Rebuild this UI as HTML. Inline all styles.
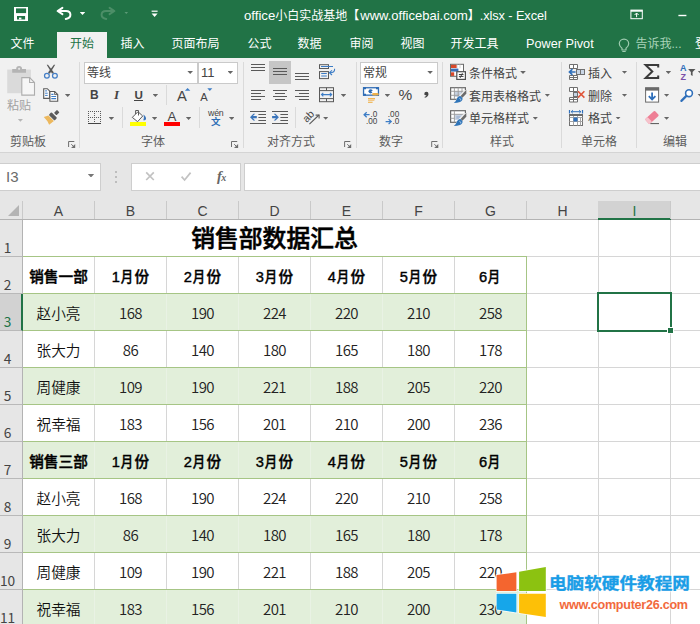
<!DOCTYPE html>
<html lang="zh-CN">
<head>
<meta charset="utf-8">
<title>office小白实战基地【www.officebai.com】.xlsx - Excel</title>
<style>
html,body{margin:0;padding:0;background:#fff}
#app{position:relative;width:700px;height:624px;overflow:hidden;background:#e6e6e6;
 font-family:"Liberation Sans","Noto Sans CJK SC",sans-serif;font-size:12px;color:#444;line-height:1}
.a,#app svg{position:absolute}
#app svg{overflow:visible}
/* title bar + tabs */
.tbar{position:absolute;left:0;top:0;width:700px;height:58px;background:#217346}
.ttl{position:absolute;left:244px;top:7px;height:18px;line-height:18px;color:#fff;font-size:13.2px;white-space:nowrap}
.ttl .t2{font-size:13px;margin-left:1px}
.ttl .t3{font-size:12.8px;letter-spacing:-.1px}
.ttl b{font-weight:400;font-size:12px}
.tab{position:absolute;top:32px;height:26px;line-height:24px;color:#fff;font-size:12px;white-space:nowrap}
.tab.on{background:#f1f1f1;color:#217346;text-align:center}
/* ribbon */
.rib{position:absolute;left:0;top:58px;width:700px;height:94px;background:#f1f1f1}
.ribline{position:absolute;left:0;top:152px;width:700px;height:1px;background:#d4d4d4}
.gsep{position:absolute;top:62px;width:1px;height:86px;background:#dadada}
.ssep{position:absolute;width:1px;background:#dadada}
.glab{position:absolute;top:135px;height:14px;line-height:14px;font-size:12px;color:#5c5c5c;white-space:nowrap;text-align:center}
.lbl{position:absolute;height:14px;line-height:14px;font-size:12px;color:#444;white-space:nowrap}
.combo{position:absolute;background:#fff;border:1px solid #cacaca;box-sizing:border-box}
.dd{position:absolute;width:5.6px;height:2.9px;background:#666;clip-path:polygon(0 0,100% 0,50% 100%)}
.dd.w{background:#fff}
.dd.dim{background:#5b9a76;width:4.4px;height:2.4px}
.dd.lt{background:#b5b5b5}
.dd.nb{background:#777;width:6.4px;height:3.4px}
/* formula bar */
.fbox{position:absolute;top:163px;height:28px;background:#fff;border:1px solid #cecece;box-sizing:border-box}
.nbtxt{position:absolute;left:6px;top:168px;height:18px;line-height:18px;font-size:15px;color:#6a6a6a}
/* grid */
.corner{position:absolute;left:8px;top:205px;width:0;height:0;border-left:11px solid transparent;border-bottom:11px solid #b4b4b4}
.ch{position:absolute;top:200px;height:19px;line-height:22px;text-align:center;font-size:14px;color:#444}
.ch.sel{background:#d2d2d2;color:#217346;height:17px;border-bottom:2px solid #217346;top:201px;margin-left:-1px;padding:0 1px;line-height:20px}
.chsep{position:absolute;top:201px;width:1px;height:18px;background:#c9c9c9}
.hdrline{position:absolute;left:0;top:219px;width:700px;height:1px;background:#b3b3b3}
.sheetbg{position:absolute;left:23px;top:220px;width:677px;height:404px;background:#fff}
.vl{position:absolute;top:220px;width:1px;height:404px;background:#d6d6d6}
.hl{position:absolute;left:23px;width:677px;height:1px;background:#d6d6d6}
.fill{position:absolute}
.ghl{position:absolute;height:1px;background:#a6c585}
.gvl{position:absolute;width:1px;background:#a6c585}
.fvl{position:absolute;width:1px;background:#e9f2e4}
.c{position:absolute;width:71px;height:36px;line-height:40px;text-align:center;color:#000;white-space:nowrap}
.c.hb{font-weight:500;font-size:14.67px;line-height:41px;-webkit-text-stroke:.4px #000}
.c.hb i{font-style:normal;display:inline-block;transform:scaleX(.84);transform-origin:35% 50%}
.c.nm{font-weight:350;font-size:14.67px;color:#111}
.c.nu{font-family:'Noto Sans CJK SC',sans-serif;font-weight:350;font-size:15px;color:#222;letter-spacing:-.5px;line-height:37px}
.title{position:absolute;text-align:center;font-weight:500;-webkit-text-stroke:.55px #000;font-size:23.8px;padding-top:1px;color:#000;white-space:nowrap}
.selbox{position:absolute;border:2px solid #217346}
.handle{position:absolute;width:5px;height:5px;background:#217346;border:1px solid #fff}
.rowhdrbg{position:absolute;left:0;top:220px;width:22px;height:404px;background:#e6e6e6}
.rowline{position:absolute;left:22px;top:220px;width:1px;height:404px;background:#b3b3b3}
.rh{position:absolute;left:0;width:22px;height:36px;border-bottom:1px solid #b9b9b9;font-size:13.7px;color:#444;font-family:'Noto Sans CJK SC',sans-serif}
.rh span{position:absolute;left:-7px;width:29px;bottom:2px;text-align:center;line-height:14px}
.rh.sel{background:#d2d2d2;color:#217346;width:21px;border-right:2px solid #217346}
/* watermark */
.wm1{position:absolute;left:549px;top:572px;font-size:15.8px;transform:scaleX(1.115);transform-origin:0 0;line-height:24px;font-weight:700;color:#1a9de6;-webkit-text-stroke:.35px #1a9de6;white-space:nowrap;text-shadow:0 0 2px #fff,0 0 2px #fff,0 0 3px #fff}
.wm2{position:absolute;left:559.4px;top:596px;font-size:12.6px;letter-spacing:-.27px;line-height:18px;font-weight:700;color:#f26a3d;white-space:nowrap;text-shadow:0 0 2px #fff,0 0 2px #fff,0 0 3px #fff}
</style>
</head>
<body>
<div id="app">
<!-- ===== title bar + tab strip ===== -->
<div class="tbar"></div>
<div class="ttl">office<b>小白实战基地【</b><span class="t2">www.officebai.com</span><b>】</b><span class="t3">.xlsx - Excel</span></div>
<div class="tab" style="left:10.5px">文件</div>
<div class="tab on" style="left:57px;width:50px">开始</div>
<div class="tab" style="left:120.5px">插入</div>
<div class="tab" style="left:171.5px">页面布局</div>
<div class="tab" style="left:247.5px">公式</div>
<div class="tab" style="left:297.5px">数据</div>
<div class="tab" style="left:349.5px">审阅</div>
<div class="tab" style="left:400.5px">视图</div>
<div class="tab" style="left:450.5px">开发工具</div>
<div class="tab" style="left:526px;font-size:12.7px">Power Pivot</div>
<div class="tab" style="left:635.5px;color:#a9d3b9">告诉我...</div>
<div class="tab" style="left:694.9px">登录</div>

<!-- ===== ribbon ===== -->
<div class="rib"></div>
<div class="ribline"></div>
<div class="gsep" style="left:79px"></div>
<div class="gsep" style="left:243px"></div>
<div class="gsep" style="left:356px"></div>
<div class="gsep" style="left:442px"></div>
<div class="gsep" style="left:561px"></div>
<div class="gsep" style="left:636px"></div>

<!-- clipboard group -->
<div class="lbl" style="left:7px;top:99px;color:#a2a2a2">粘贴</div>
<div class="glab" style="left:10px;width:36px">剪贴板</div>

<!-- font group -->
<div class="combo" style="left:84px;top:62px;width:114px;height:22px"></div>
<div class="combo" style="left:198px;top:62px;width:40px;height:22px"></div>
<div class="lbl" style="left:87px;top:66px">等线</div>
<div class="lbl" style="left:201px;top:66px;font-size:13px">11</div>
<div class="lbl" style="left:90px;top:87px;font-size:12px;font-weight:700;line-height:16px;height:16px;color:#444">B</div>
<div class="lbl" style="left:114px;top:87px;font-size:13px;font-style:italic;font-weight:700;font-family:'Liberation Serif',serif;line-height:16px;height:16px;color:#444">I</div>
<div class="lbl" style="left:134.6px;top:87px;font-size:11.6px;line-height:16px;height:16px;color:#444;font-weight:700">U</div>
<div class="a" style="left:134px;top:100px;width:9px;height:1px;background:#444"></div>
<div class="ssep" style="left:166px;top:85px;height:20px"></div>
<div class="lbl" style="left:177px;top:87.6px;font-size:14.8px;line-height:17px;height:17px;color:#444">A</div>
<div class="lbl" style="left:200.2px;top:90px;font-size:11.2px;line-height:15px;height:15px;color:#444">A</div>
<div class="ssep" style="left:122px;top:107px;height:21px"></div>
<div class="a" style="left:130px;top:122px;width:16px;height:4px;background:#ffff00"></div>
<div class="lbl" style="left:167.6px;top:109.4px;font-size:13.3px;line-height:15px;height:15px;color:#444">A</div>
<div class="a" style="left:164px;top:122px;width:16px;height:4px;background:#ff0000"></div>
<div class="ssep" style="left:199px;top:107px;height:21px"></div>
<div class="lbl" style="left:208px;top:107.6px;font-size:8.8px;line-height:10px;height:10px;color:#444;letter-spacing:-.2px">wén</div>
<div class="lbl" style="left:211px;top:117px;font-size:9.5px;line-height:10px;height:10px;color:#2b6cb5;font-weight:700">文</div>
<div class="glab" style="left:141px;width:24px">字体</div>

<!-- alignment group -->
<div class="a" style="left:269px;top:61px;width:22px;height:23px;background:#c6c6c6"></div>
<div class="ssep" style="left:295px;top:107px;height:21px"></div>
<div class="glab" style="left:267px;width:48px">对齐方式</div>

<!-- number group -->
<div class="combo" style="left:360px;top:62px;width:78px;height:22px"></div>
<div class="lbl" style="left:363px;top:66px">常规</div>
<div class="lbl" style="left:398.6px;top:86.3px;font-size:15.4px;line-height:17px;height:17px;color:#444">%</div>
<div class="glab" style="left:379px;width:24px">数字</div>

<!-- styles group -->
<div class="lbl" style="left:469px;top:67px">条件格式</div>
<div class="lbl" style="left:469px;top:90px">套用表格格式</div>
<div class="lbl" style="left:469px;top:112px">单元格样式</div>
<div class="glab" style="left:490px;width:24px">样式</div>

<!-- cells group -->
<div class="lbl" style="left:588px;top:67px">插入</div>
<div class="lbl" style="left:588px;top:90px">删除</div>
<div class="lbl" style="left:588px;top:112px">格式</div>
<div class="glab" style="left:581px;width:36px">单元格</div>

<!-- editing group -->
<div class="glab" style="left:663px;width:24px">编辑</div>

<!-- dropdown arrows -->
<div class="dd w" style="left:79.7px;top:12.1px"></div>
<div class="dd dim" style="left:124.1px;top:11.5px"></div>
<div class="dd lt" style="left:17.6px;top:118.8px"></div>
<div class="dd" style="left:64.9px;top:94.0px"></div>
<div class="dd" style="left:187.4px;top:71.0px"></div>
<div class="dd" style="left:227.5px;top:71.0px"></div>
<div class="dd" style="left:152.6px;top:94.0px"></div>
<div class="dd" style="left:108.6px;top:117.0px"></div>
<div class="dd" style="left:151.8px;top:117.0px"></div>
<div class="dd" style="left:185.8px;top:117.0px"></div>
<div class="dd" style="left:228.9px;top:117.0px"></div>
<div class="dd" style="left:340.7px;top:94.0px"></div>
<div class="dd" style="left:322.9px;top:116.8px"></div>
<div class="dd" style="left:427.3px;top:71.0px"></div>
<div class="dd" style="left:384.6px;top:94.0px"></div>
<div class="dd" style="left:520.2px;top:71.0px"></div>
<div class="dd" style="left:544.6px;top:93.8px"></div>
<div class="dd" style="left:532.5px;top:116.8px"></div>
<div class="dd" style="left:621.7px;top:70.8px"></div>
<div class="dd" style="left:621.7px;top:93.8px"></div>
<div class="dd" style="left:615.3px;top:116.5px"></div>
<div class="dd" style="left:665.6px;top:71.0px"></div>
<div class="dd" style="left:663.8px;top:93.8px"></div>
<div class="dd" style="left:663.8px;top:116.8px"></div>
<div class="dd" style="left:697.8px;top:71.0px"></div>
<div class="dd" style="left:697.4px;top:93.8px"></div>
<!-- small icon texts -->
<div class="lbl" style="left:301px;top:109.6px;width:14px;font-size:10.5px;line-height:12px;height:12px;color:#444;transform:rotate(-45deg);transform-origin:50% 50%;text-align:center">ab</div>
<div class="lbl" style="left:370.4px;top:110px;font-size:8.2px;line-height:9px;height:9px;color:#444">.0</div>
<div class="lbl" style="left:366px;top:117px;font-size:8.2px;line-height:9px;height:9px;color:#444">.00</div>
<div class="lbl" style="left:387.8px;top:110px;font-size:8.2px;line-height:9px;height:9px;color:#444">.00</div>
<div class="lbl" style="left:392.6px;top:117px;font-size:8.2px;line-height:9px;height:9px;color:#444">.0</div>
<div class="lbl" style="left:680px;top:63px;font-size:9px;line-height:10px;height:10px;color:#2f6fba;font-weight:700">A</div>
<div class="lbl" style="left:680.4px;top:71.6px;font-size:9px;line-height:10px;height:10px;color:#7b4fa8;font-weight:700">Z</div>
<!-- ===== formula bar ===== -->
<div class="fbox" style="left:-1px;width:102px"></div>
<div class="fbox" style="left:131px;width:110px"></div>
<div class="fbox" style="left:244px;width:460px"></div>
<div class="nbtxt">I3</div>
<div class="dd nb" style="left:87.8px;top:174.1px"></div>
<div class="a" style="left:115px;top:171px;width:2px;height:2px;background:#bdbdbd;box-shadow:0 5px 0 #bdbdbd,0 10px 0 #bdbdbd"></div>
<div class="lbl" style="left:217px;top:168px;font-size:14.5px;line-height:16px;height:16px;font-style:italic;font-weight:700;font-family:'Liberation Serif',serif;color:#666">f<span style="font-size:10px;margin-left:-.5px">x</span></div>

<!-- ===== icons (single overlay, page pixel coordinates) ===== -->
<svg id="ico" width="700" height="200" viewBox="0 0 700 200" style="left:0;top:0">
<!-- title-bar icons -->
<g id="qat">
<rect x="14" y="7" width="14" height="14" fill="#fff"/>
<rect x="16" y="8.4" width="10.1" height="4.7" fill="#217346"/>
<rect x="17" y="16" width="8.1" height="3.5" fill="#217346"/>
<rect x="19" y="17.6" width="2.4" height="1.9" fill="#fff"/>
<path d="M62.4 7.8 L57.6 11 L62.4 14.1 M58 11 H66 C69 11 70.4 12.8 70.4 14.8 C70.4 17 68.4 18.5 65.8 18.9" fill="none" stroke="#fff" stroke-width="2" stroke-linecap="round" stroke-linejoin="round"/>
<path d="M109.6 7.8 L114.4 11 L109.6 14.1 M114 11 H106 C103 11 101.6 12.8 101.6 14.8 C101.6 17 103.6 18.5 106.2 18.9" fill="none" stroke="#4c8e67" stroke-width="2" stroke-linecap="round" stroke-linejoin="round"/>
<rect x="151.6" y="10.6" width="6" height="1.2" fill="#fff"/>
<path d="M151.6 13.6 h6 l-3 3.4 z" fill="#fff"/>
<!-- ribbon display options -->
<rect x="630.9" y="10.1" width="11.4" height="8.6" fill="none" stroke="#fff" stroke-width="1"/>
<rect x="630.9" y="10.1" width="11.4" height="1.6" fill="#fff"/>
<path d="M636.6 17.2 V13.2 M634.6 15 L636.6 13 L638.6 15" fill="none" stroke="#fff" stroke-width="1"/>
<rect x="678.4" y="14.8" width="8" height="1.4" fill="#fff"/>
<!-- tell-me bulb -->
<path d="M622 50 v-1.8 c-1.8 -1.2 -2.7 -2.6 -2.7 -4.4 a4.7 4.7 0 0 1 9.4 0 c0 1.8 -0.9 3.2 -2.7 4.4 v1.8 z M622.3 51.5 h3.4" fill="none" stroke="#9fccb0" stroke-width="1.2" stroke-linejoin="round"/>
</g>

<!-- clipboard group -->
<g id="clip">
<rect x="7.2" y="69.6" width="23.7" height="23.6" fill="#dadada"/>
<path d="M12.2 72.7 V68.9 h4 v-.4 a2.9 2.6 0 0 1 5.8 0 v.4 h4 v3.8 z" fill="#b4b4b4"/>
<circle cx="19.1" cy="68.8" r="1.1" fill="#e4e4e4"/>
<path d="M21.8 77.6 h7.8 l4.9 4.9 v12.6 h-12.7 z" fill="#f6f6f6" stroke="#adadad" stroke-width="1.1"/>
<path d="M29.6 77.6 v4.9 h4.9" fill="none" stroke="#adadad" stroke-width="1.1"/>
<!-- scissors -->
<path d="M46.7 64.7 L48 64.7 L53.9 72.5 L52.1 73.8 z" fill="#585858"/><path d="M55.2 64.7 L53.9 64.7 L48 72.5 L49.8 73.8 z" fill="#585858"/>
<circle cx="46.9" cy="75.7" r="2.4" fill="none" stroke="#457fc6" stroke-width="1.25"/>
<circle cx="54.9" cy="75.7" r="2.4" fill="none" stroke="#457fc6" stroke-width="1.25"/>
<!-- copy -->
<path d="M43.7 88.7 h3.6 l2.2 2.2 v7.5 h-5.8 z" fill="#fff" stroke="#5a5a5a" stroke-width="1.1"/>
<path d="M45.1 90.9 h2 M45.1 93.2 h2.6 M45.1 95.4 h2.6" stroke="#3d7dc6" stroke-width="1"/>
<path d="M49.9 91.5 h4.8 l3 3 v6.8 h-7.8 z" fill="#fff" stroke="#5a5a5a" stroke-width="1.1"/>
<path d="M54.6 91.7 v2.9 h2.9" fill="none" stroke="#5a5a5a" stroke-width=".9"/>
<path d="M51.3 94.4 h2.2 M51.3 96.5 h4.8 M51.3 98.6 h4.8" stroke="#3d7dc6" stroke-width="1.1"/>
<!-- format painter -->
<g transform="translate(52.9 116.4) rotate(45)">
<rect x="-1.7" y="-7.5" width="3.4" height="4.2" rx=".5" fill="#5b5b5b"/>
<rect x="-4.1" y="-1.9" width="8.2" height="3.7" rx=".9" fill="#5b5b5b"/>
<path d="M-3.9 2.5 h7.8 l-.7 6 l-3.6 -1.2 l-5.6 -.4 z" fill="#ecb85e"/>
</g>
<!-- dialog launchers -->
<path d="M68.6 147 v-5.5 h5.7 M71.3 144.2 l2.4 2.4" fill="none" stroke="#6e6e6e" stroke-width="1"/>
<path d="M71.1 148 h4.1 v-4.1 z" fill="#6e6e6e"/>
<path d="M231.5 147 v-5.5 h5.7 M234.2 144.2 l2.4 2.4" fill="none" stroke="#6e6e6e" stroke-width="1"/>
<path d="M234.0 148 h4.1 v-4.1 z" fill="#6e6e6e"/>
<path d="M344.6 147 v-5.5 h5.7 M347.3 144.2 l2.4 2.4" fill="none" stroke="#6e6e6e" stroke-width="1"/>
<path d="M347.1 148 h4.1 v-4.1 z" fill="#6e6e6e"/>
<path d="M431.7 147 v-5.5 h5.7 M434.4 144.2 l2.4 2.4" fill="none" stroke="#6e6e6e" stroke-width="1"/>
<path d="M434.2 148 h4.1 v-4.1 z" fill="#6e6e6e"/>

</g>

<!-- font group icons -->
<g id="font">
<!-- borders icon -->
<path d="M88 111.5 h13 M88 117.5 h13 M88.5 111 v12 M94.5 111 v12 M100.5 111 v12" stroke="#5a5a5a" stroke-width="1" stroke-dasharray="1 1" fill="none" shape-rendering="crispEdges"/>
<path d="M88 123.5 h13" stroke="#444" stroke-width="1" shape-rendering="crispEdges"/>
<!-- fill bucket -->
<path d="M132.3 117.4 L138 111.7 L142.7 116 L137.6 121.7 z" fill="#fff" stroke="#5a5a5a" stroke-width="1" stroke-linejoin="round"/>
<path d="M135.6 114 v-3.5 h2.9 v5" fill="none" stroke="#5a5a5a" stroke-width="1"/>
<path d="M143.2 114.4 c2.2 1.2 3.2 3 2.8 4.6 c-.3 1.1 -1.300 1.600 -2.800 1.200 c.9 -1.600 1 -3.600 0 -5.800 z" fill="#3a74ba"/>
<!-- grow / shrink triangles -->
<path d="M184.9 90.7 h5.4 l-2.7 -2.6 z" fill="#3d7dc6"/>
<path d="M207.3 88.3 h5 l-2.5 2.7 z" fill="#3d7dc6"/>
</g>

<!-- alignment group icons -->
<g id="align" stroke="#595959" stroke-width="1" fill="none">
<path d="M251 64.5 h14 M251 67.5 h14 M251 70.5 h14"/>
<path d="M273 68.5 h14 M273 71.5 h14 M273 74.5 h14"/>
<path d="M295 73.5 h14 M295 76.5 h14 M295 79.5 h14"/>
<path d="M251 90.5 h14 M251 93.5 h10 M251 96.5 h14 M251 99.5 h10"/>
<path d="M273 90.5 h14 M275 93.5 h10 M273 96.5 h14 M275 99.5 h10"/>
<path d="M295 90.5 h14 M299 93.5 h10 M295 96.5 h14 M299 99.5 h10"/>
<!-- indent -->
<path d="M250 111.5 h16 M258.4 114.5 h7.6 M258.4 117.5 h7.6 M258.4 120.5 h7.6 M250 123.5 h16"/>
<path d="M272 111.5 h16 M280.4 114.5 h7.6 M280.4 117.5 h7.6 M280.4 120.5 h7.6 M272 123.5 h16"/>
<path d="M250 117.2 L253.4 113.8 L255.2 113.8 L252.9 116.1 H256.8 V118.3 H252.9 L255.2 120.6 L253.4 120.6 Z" fill="#3a74ba" stroke="none"/>
<path d="M278.9 117.2 L275.5 113.8 L273.7 113.8 L276 116.1 H272.1 V118.3 H276 L273.7 120.6 L275.5 120.6 Z" fill="#3a74ba" stroke="none"/>
<!-- wrap text -->
<rect x="319.5" y="64.7" width="9" height="3.8"/>
<rect x="319.5" y="71.6" width="9" height="7"/>
<path d="M321 66.5 h12" stroke="#3d7dc6"/>
<path d="M321.2 73.5 h5.6 M321.2 76 h5.6" stroke="#3d7dc6" stroke-width="1.1"/>
<path d="M334.6 68.8 c.2 2.6 -1 3.9 -4.8 3.9 M332 70.4 l-2.6 2.3 l2.6 2.3" stroke="#3d7dc6" stroke-width="1.1"/>
<!-- merge & center -->
<rect x="319.5" y="87.7" width="14" height="14"/>
<path d="M319.5 90.6 h14 M319.5 98.6 h14 M326.5 87.7 v2.9 M326.5 98.6 v3.1"/>
<path d="M321.4 94.6 h10.4 M323.3 92.9 l-1.8 1.7 l1.8 1.7 M329.9 92.9 l1.8 1.7 l-1.8 1.7" stroke="#3d7dc6" stroke-width="1.1"/>
<!-- orientation -->
<path d="M309.4 124.2 L319 115" stroke-width="1.1"/>
<path d="M315.6 115.1 h3.5 v3.4" stroke-width="1.1"/>
</g>

<!-- number group icons -->
<g id="num">
<rect x="363.55" y="87.75" width="14.9" height="7.4" fill="#fff" stroke="#2f6cb5" stroke-width="1.3"/>
<path d="M363 87.2 h3 v2 h-3 z M376 87.2 h3 v2 h-3 z M363 93.7 h3 v2 h-3 z M376 93.7 h3 v2 h-3 z" fill="#2f6cb5"/>
<circle cx="370.6" cy="91.3" r="2.1" fill="#2f6cb5"/>
<path d="M371 91.3 l2.4 -.6 v2.4 z" fill="#fff"/>
<rect x="372.1" y="92.9" width="6.6" height="2.7" rx="1.3" fill="#eeb04a"/>
<rect x="368" y="98" width="7" height="1.4" fill="#efb555"/>
<rect x="368" y="99.8" width="6.4" height="1.1" fill="#f2c37a"/>
<rect x="368" y="101.7" width="4.6" height="1.2" fill="#efb555"/>
<!-- comma -->
<path d="M424.3 93.9 a2.1 2.1 0 1 1 4.2 0 c0 1.7 -1.3 3.1 -3.6 3.9 l-.4 -.8 c1.1 -.5 1.8 -1.1 1.9 -1.7 c-1.2 0 -2.1 -.4 -2.1 -1.4 z" fill="#444"/>
<!-- decimal arrows -->
<path d="M369.6 114.7 h-5.6 M366.7 112.2 l-2.6 2.5 l2.6 2.5" fill="none" stroke="#3d7dc6" stroke-width="1.3"/>
<path d="M385.6 121.6 h5.6 M388.6 119.1 l2.6 2.5 l-2.6 2.5" fill="none" stroke="#3d7dc6" stroke-width="1.3"/>
</g>
<!-- styles group icons -->
<g id="styles">
<!-- conditional formatting -->
<rect x="450.5" y="64.3" width="13" height="12" fill="#fff" stroke="#6a6a6a" stroke-width="1"/>
<path d="M457 64.3 v4 M460 64.3 v4" stroke="#c8c8c8" stroke-width=".8" fill="none"/>
<rect x="451" y="64.8" width="5.6" height="3.2" fill="#d8482a"/>
<rect x="451" y="68.6" width="7.4" height="3" fill="#3a6fb7"/>
<rect x="451" y="72.3" width="3.2" height="3.6" fill="#d8482a"/>
<rect x="456.8" y="71.7" width="8.6" height="7.7" fill="#fff" stroke="#4f4f4f" stroke-width="1.2"/>
<path d="M458.9 74.5 h4.6 M458.9 76.4 h4.6 M462.4 73.2 l-2.2 4.6" stroke="#3f3f3f" stroke-width="1" fill="none"/>
<!-- format as table -->
<rect x="450.6" y="87.7" width="14.8" height="11.6" fill="#fff" stroke="#6a6a6a" stroke-width="1.2"/>
<rect x="454.4" y="91.3" width="8" height="5.6" fill="#c7d2e2"/>
<path d="M450.6 91.3 h14.8 M450.6 95.3 h14.8 M454.4 87.7 v11.6 M458.2 87.7 v11.6 M462 87.7 v11.6" stroke="#9a9a9a" stroke-width=".9" fill="none"/>
<path d="M467.4 90.0 L467.4 101.5 L461.8 104.0 L452.6 104.0 L452.6 101.4 L456 100.0 L459.2 95.6 L464.6 90.0 z" fill="#f1f1f1"/>
<path d="M466.3 89.8 V93.8 L462.4 97.8 L460.6 96.0 z" fill="#6b6b6b"/>
<path d="M460.4 96.1 l2 2 c.6 1.6 -.5 3.1 -2.4 3.8 c-1.9 .7 -4 .9 -6.2 1 c1.6 -1 2.2 -2.2 2.8 -3.6 c.7 -1.8 2 -3 3.8 -3.2 z" fill="#2f74b8"/>
<path d="M459.6 98.4 c.9 .2 1.3 .9 1 1.9" stroke="#cfe0f2" stroke-width=".9" fill="none"/>
<!-- cell styles -->
<rect x="450.6" y="110.7" width="14.8" height="11.6" fill="#fff" stroke="#6a6a6a" stroke-width="1.2"/>
<rect x="454.4" y="114.3" width="8" height="5.6" fill="#c7d2e2"/>
<path d="M450.6 114.3 h14.8 M454.4 110.7 v11.6 M450.6 118.3 h3.8" stroke="#9a9a9a" stroke-width=".9" fill="none"/>
<rect x="456.4" y="115.9" width="4" height="3" fill="#a9bbd6"/>
<path d="M467.4 113.0 L467.4 124.5 L461.8 127.0 L452.6 127.0 L452.6 124.4 L456 123.0 L459.2 118.6 L464.6 113.0 z" fill="#f1f1f1"/>
<path d="M466.3 112.8 V116.8 L462.4 120.8 L460.6 119.0 z" fill="#6b6b6b"/>
<path d="M460.4 119.1 l2 2 c.6 1.6 -.5 3.1 -2.4 3.8 c-1.9 .7 -4 .9 -6.2 1 c1.6 -1 2.2 -2.2 2.8 -3.6 c.7 -1.8 2 -3 3.8 -3.2 z" fill="#2f74b8"/>
<path d="M459.6 121.4 c.9 .2 1.3 .9 1 1.9" stroke="#cfe0f2" stroke-width=".9" fill="none"/>
</g>

<!-- cells group icons -->
<g id="cells" fill="none" stroke="#707070" stroke-width="1">
<!-- insert -->
<path d="M569.5 64.5 h8 v4 h-8 z M573.5 64.5 v4" fill="#fff"/>
<path d="M569.5 75.5 h8 v4 h-8 z" fill="#fff"/><path d="M573.5 75.5 v4 M569.5 77.5 h8"/>
<rect x="576.5" y="69.5" width="8" height="5" fill="#c9d6e6"/>
<path d="M580.5 69.5 v5"/>
<path d="M575.6 72 h-6 M572.4 69.2 l-2.9 2.8 l2.9 2.8" stroke="#2f6fba" stroke-width="1.7"/>
<!-- delete -->
<path d="M569.5 87.5 h8 v4 h-8 z" fill="#fff"/><path d="M573.5 87.5 v4"/>
<rect x="573.5" y="92.5" width="4" height="4" fill="#c9d6e6"/>
<path d="M569.5 97.5 h8 v4.5 h-8 z" fill="#fff"/><path d="M573.5 97.5 v4.5 M569.5 99.5 h8"/>
<path d="M578 91.2 l6.4 6.4 M584.4 91.2 l-6.4 6.4" stroke="#e0563a" stroke-width="1.6"/>
<!-- format -->
<path d="M569.5 110 v3.4 M582.5 110 v3.4" stroke="#2f6fba" stroke-width="1.2"/>
<path d="M571 111.7 h10 M572.8 110.2 l-1.6 1.5 l1.6 1.5 M579.2 110.2 l1.6 1.5 l-1.6 1.5" stroke="#2f6fba" stroke-width="1"/>
<rect x="569.5" y="114.5" width="13" height="11" fill="#fff"/>
<path d="M569.5 117.5 h13 M569.5 121.5 h13 M573.5 114.5 v11 M577.5 114.5 v11 M580.5 117 v8.5" stroke="#a5a5a5" stroke-width="1"/>
<rect x="569" y="114" width="14" height="2" fill="#6a6a6a" stroke="none"/>
<rect x="573.5" y="117.5" width="4" height="4" fill="#2f6fba" stroke="none"/>
</g>

<!-- editing group icons -->
<g id="edit">
<path d="M658.2 67.6 V65 H645.6 L652.3 71.5 L645.6 78 H658.2 V75.4" fill="none" stroke="#3b3b3b" stroke-width="2" stroke-linejoin="miter"/>
<path d="M688.1 69 h7.4 l-2.9 3.1 v4 l-1.7 -1.1 v-2.9 z" fill="#555"/>
<!-- fill down -->
<rect x="645.6" y="87.9" width="13" height="14.2" fill="#fff" stroke="#6a6a6a" stroke-width="1"/>
<rect x="645.1" y="87.4" width="14" height="3.2" fill="#6a6a6a"/>
<path d="M652.1 92.4 v6.6 M648.8 96.2 l3.3 3.3 l3.3 -3.3" fill="none" stroke="#2f6fba" stroke-width="1.8"/>
<!-- find -->
<circle cx="689" cy="93.2" r="3.4" fill="#fff" stroke="#2f6fba" stroke-width="1.6"/>
<path d="M686.4 95.9 l-5 5" stroke="#2f6fba" stroke-width="2.2" stroke-linecap="round"/>
<!-- clear (eraser) -->
<g transform="translate(652 117.4) rotate(-42)">
<rect x="-6.6" y="-3.3" width="13.2" height="6.6" rx="1.2" fill="#ee7f95"/>
<rect x="-6.6" y="-3.3" width="3.6" height="6.6" rx="1" fill="#f6c3cc"/>
</g>
<path d="M650.4 123.6 h8.6" stroke="#555" stroke-width="1"/>
</g>

<!-- formula bar icons -->
<g id="fbar" fill="none" stroke="#c2c2c2" stroke-width="1.7">
<path d="M146.2 172.4 l7.6 7.6 M153.8 172.4 l-7.6 7.6"/>
<path d="M181.6 176.6 l3 3.4 l6 -7.4"/>
</g>

</svg>
<div class="hdrline"></div>
<div id="grid">
<div class="colhdr">
<div class="ch" style="left:23px;width:71px">A</div><div class="chsep" style="left:94px"></div>
<div class="ch" style="left:95px;width:71px">B</div><div class="chsep" style="left:166px"></div>
<div class="ch" style="left:167px;width:71px">C</div><div class="chsep" style="left:238px"></div>
<div class="ch" style="left:239px;width:71px">D</div><div class="chsep" style="left:310px"></div>
<div class="ch" style="left:311px;width:71px">E</div><div class="chsep" style="left:382px"></div>
<div class="ch" style="left:383px;width:71px">F</div><div class="chsep" style="left:454px"></div>
<div class="ch" style="left:455px;width:71px">G</div><div class="chsep" style="left:526px"></div>
<div class="ch" style="left:527px;width:71px">H</div><div class="chsep" style="left:598px"></div>
<div class="ch sel" style="left:599px;width:71px">I</div><div class="chsep" style="left:670px"></div>
<div class="ch" style="left:671px;width:71px">J</div><div class="chsep" style="left:742px"></div>
<div class="corner"></div><div class="chsep" style="left:22px"></div>
</div>
<div class="sheet">
<div class="sheetbg"></div>
<div class="vl" style="left:94px"></div><div class="vl" style="left:166px"></div><div class="vl" style="left:238px"></div><div class="vl" style="left:310px"></div><div class="vl" style="left:382px"></div><div class="vl" style="left:454px"></div><div class="vl" style="left:526px"></div><div class="vl" style="left:598px"></div><div class="vl" style="left:670px"></div><div class="vl" style="left:742px"></div>
<div class="hl" style="top:256px"></div><div class="hl" style="top:293px"></div><div class="hl" style="top:330px"></div><div class="hl" style="top:367px"></div><div class="hl" style="top:404px"></div><div class="hl" style="top:441px"></div><div class="hl" style="top:478px"></div><div class="hl" style="top:515px"></div><div class="hl" style="top:552px"></div><div class="hl" style="top:589px"></div><div class="hl" style="top:626px"></div><div class="hl" style="top:663px"></div>
<div class="fill" style="top:220px;left:23px;width:504px;height:36px;background:#fff"></div>
<div class="fill" style="top:294px;left:23px;width:504px;height:36px;background:#e2efda"></div>
<div class="fill" style="top:368px;left:23px;width:504px;height:36px;background:#e2efda"></div>
<div class="fill" style="top:442px;left:23px;width:504px;height:36px;background:#e2efda"></div>
<div class="fill" style="top:516px;left:23px;width:504px;height:36px;background:#e2efda"></div>
<div class="fill" style="top:590px;left:23px;width:504px;height:36px;background:#e2efda"></div>
<div class="ghl" style="top:256px;left:23px;width:504px"></div><div class="ghl" style="top:293px;left:23px;width:504px"></div><div class="ghl" style="top:330px;left:23px;width:504px"></div><div class="ghl" style="top:367px;left:23px;width:504px"></div><div class="ghl" style="top:404px;left:23px;width:504px"></div><div class="ghl" style="top:441px;left:23px;width:504px"></div><div class="ghl" style="top:478px;left:23px;width:504px"></div><div class="ghl" style="top:515px;left:23px;width:504px"></div><div class="ghl" style="top:552px;left:23px;width:504px"></div><div class="ghl" style="top:589px;left:23px;width:504px"></div><div class="ghl" style="top:626px;left:23px;width:504px"></div>
<div class="fvl" style="left:94px;top:294px;height:36px"></div><div class="fvl" style="left:166px;top:294px;height:36px"></div><div class="fvl" style="left:238px;top:294px;height:36px"></div><div class="fvl" style="left:310px;top:294px;height:36px"></div><div class="fvl" style="left:382px;top:294px;height:36px"></div><div class="fvl" style="left:454px;top:294px;height:36px"></div><div class="fvl" style="left:94px;top:368px;height:36px"></div><div class="fvl" style="left:166px;top:368px;height:36px"></div><div class="fvl" style="left:238px;top:368px;height:36px"></div><div class="fvl" style="left:310px;top:368px;height:36px"></div><div class="fvl" style="left:382px;top:368px;height:36px"></div><div class="fvl" style="left:454px;top:368px;height:36px"></div><div class="fvl" style="left:94px;top:442px;height:36px"></div><div class="fvl" style="left:166px;top:442px;height:36px"></div><div class="fvl" style="left:238px;top:442px;height:36px"></div><div class="fvl" style="left:310px;top:442px;height:36px"></div><div class="fvl" style="left:382px;top:442px;height:36px"></div><div class="fvl" style="left:454px;top:442px;height:36px"></div><div class="fvl" style="left:94px;top:516px;height:36px"></div><div class="fvl" style="left:166px;top:516px;height:36px"></div><div class="fvl" style="left:238px;top:516px;height:36px"></div><div class="fvl" style="left:310px;top:516px;height:36px"></div><div class="fvl" style="left:382px;top:516px;height:36px"></div><div class="fvl" style="left:454px;top:516px;height:36px"></div><div class="fvl" style="left:94px;top:590px;height:36px"></div><div class="fvl" style="left:166px;top:590px;height:36px"></div><div class="fvl" style="left:238px;top:590px;height:36px"></div><div class="fvl" style="left:310px;top:590px;height:36px"></div><div class="fvl" style="left:382px;top:590px;height:36px"></div><div class="fvl" style="left:454px;top:590px;height:36px"></div>
<div class="gvl" style="left:526px;top:256px;height:407px"></div>
<div class="title" style="left:23px;width:503px;top:220px;height:36px;line-height:36px">销售部数据汇总</div>
<div class="c hb" style="left:23px;top:257px">销售一部</div><div class="c hb" style="left:95px;top:257px">1<i>月</i>份</div><div class="c hb" style="left:167px;top:257px">2<i>月</i>份</div><div class="c hb" style="left:239px;top:257px">3<i>月</i>份</div><div class="c hb" style="left:311px;top:257px">4<i>月</i>份</div><div class="c hb" style="left:383px;top:257px">5<i>月</i>份</div><div class="c hb" style="left:455px;top:257px">6<i>月</i></div>
<div class="c nm" style="left:23px;top:294px">赵小亮</div><div class="c nu" style="left:95px;top:294px">168</div><div class="c nu" style="left:167px;top:294px">190</div><div class="c nu" style="left:239px;top:294px">224</div><div class="c nu" style="left:311px;top:294px">220</div><div class="c nu" style="left:383px;top:294px">210</div><div class="c nu" style="left:455px;top:294px">258</div>
<div class="c nm" style="left:23px;top:331px">张大力</div><div class="c nu" style="left:95px;top:331px">86</div><div class="c nu" style="left:167px;top:331px">140</div><div class="c nu" style="left:239px;top:331px">180</div><div class="c nu" style="left:311px;top:331px">165</div><div class="c nu" style="left:383px;top:331px">180</div><div class="c nu" style="left:455px;top:331px">178</div>
<div class="c nm" style="left:23px;top:368px">周健康</div><div class="c nu" style="left:95px;top:368px">109</div><div class="c nu" style="left:167px;top:368px">190</div><div class="c nu" style="left:239px;top:368px">221</div><div class="c nu" style="left:311px;top:368px">188</div><div class="c nu" style="left:383px;top:368px">205</div><div class="c nu" style="left:455px;top:368px">220</div>
<div class="c nm" style="left:23px;top:405px">祝幸福</div><div class="c nu" style="left:95px;top:405px">183</div><div class="c nu" style="left:167px;top:405px">156</div><div class="c nu" style="left:239px;top:405px">201</div><div class="c nu" style="left:311px;top:405px">210</div><div class="c nu" style="left:383px;top:405px">200</div><div class="c nu" style="left:455px;top:405px">236</div>
<div class="c hb" style="left:23px;top:442px">销售三部</div><div class="c hb" style="left:95px;top:442px">1<i>月</i>份</div><div class="c hb" style="left:167px;top:442px">2<i>月</i>份</div><div class="c hb" style="left:239px;top:442px">3<i>月</i>份</div><div class="c hb" style="left:311px;top:442px">4<i>月</i>份</div><div class="c hb" style="left:383px;top:442px">5<i>月</i>份</div><div class="c hb" style="left:455px;top:442px">6<i>月</i></div>
<div class="c nm" style="left:23px;top:479px">赵小亮</div><div class="c nu" style="left:95px;top:479px">168</div><div class="c nu" style="left:167px;top:479px">190</div><div class="c nu" style="left:239px;top:479px">224</div><div class="c nu" style="left:311px;top:479px">220</div><div class="c nu" style="left:383px;top:479px">210</div><div class="c nu" style="left:455px;top:479px">258</div>
<div class="c nm" style="left:23px;top:516px">张大力</div><div class="c nu" style="left:95px;top:516px">86</div><div class="c nu" style="left:167px;top:516px">140</div><div class="c nu" style="left:239px;top:516px">180</div><div class="c nu" style="left:311px;top:516px">165</div><div class="c nu" style="left:383px;top:516px">180</div><div class="c nu" style="left:455px;top:516px">178</div>
<div class="c nm" style="left:23px;top:553px">周健康</div><div class="c nu" style="left:95px;top:553px">109</div><div class="c nu" style="left:167px;top:553px">190</div><div class="c nu" style="left:239px;top:553px">221</div><div class="c nu" style="left:311px;top:553px">188</div><div class="c nu" style="left:383px;top:553px">205</div><div class="c nu" style="left:455px;top:553px">220</div>
<div class="c nm" style="left:23px;top:590px">祝幸福</div><div class="c nu" style="left:95px;top:590px">183</div><div class="c nu" style="left:167px;top:590px">156</div><div class="c nu" style="left:239px;top:590px">201</div><div class="c nu" style="left:311px;top:590px">210</div><div class="c nu" style="left:383px;top:590px">200</div><div class="c nu" style="left:455px;top:590px">236</div>
<div class="selbox" style="left:597px;top:292px;width:71px;height:36px"></div><div class="handle" style="left:667px;top:327px"></div>
</div>
<div class="rowhdr">
<div class="rowhdrbg"></div><div class="rowline"></div>
<div class="rh" style="top:220px"><span>1</span></div><div class="rh" style="top:257px"><span>2</span></div><div class="rh sel" style="top:294px"><span>3</span></div><div class="rh" style="top:331px"><span>4</span></div><div class="rh" style="top:368px"><span>5</span></div><div class="rh" style="top:405px"><span>6</span></div><div class="rh" style="top:442px"><span>7</span></div><div class="rh" style="top:479px"><span>8</span></div><div class="rh" style="top:516px"><span>9</span></div><div class="rh" style="top:553px"><span>10</span></div><div class="rh" style="top:590px"><span>11</span></div>
</div>
</div>
<!-- ===== watermark ===== -->
<svg width="60" height="60" viewBox="490 560 60 60" style="left:490px;top:560px">
<g stroke="#fff" stroke-width="1.6" stroke-linejoin="round" opacity=".85">
<polygon points="496.6,574.9 516.4,572.3 516.4,591 496.6,591" fill="#fff"/>
<polygon points="519.1,571.8 545.8,567.1 545.8,591 519.1,591" fill="#fff"/>
<polygon points="496.6,593.8 516.4,593.8 516.4,612.6 496.6,609.5" fill="#fff"/>
<polygon points="519.1,593.8 545.8,593.8 545.8,616.9 519.1,613" fill="#fff"/>
</g>
<polygon points="496.6,574.9 516.4,572.3 516.4,591 496.6,591" fill="#f4652f"/>
<polygon points="519.1,571.8 545.8,567.1 545.8,591 519.1,591" fill="#8cc211"/>
<polygon points="496.6,593.8 516.4,593.8 516.4,612.6 496.6,609.5" fill="#16a6ea"/>
<polygon points="519.1,593.8 545.8,593.8 545.8,616.9 519.1,613" fill="#fdc007"/>
</svg>
<div class="wm1">电脑软硬件教程网</div>
<div class="wm2">www.computer26.com</div>
</div>
</body>
</html>
